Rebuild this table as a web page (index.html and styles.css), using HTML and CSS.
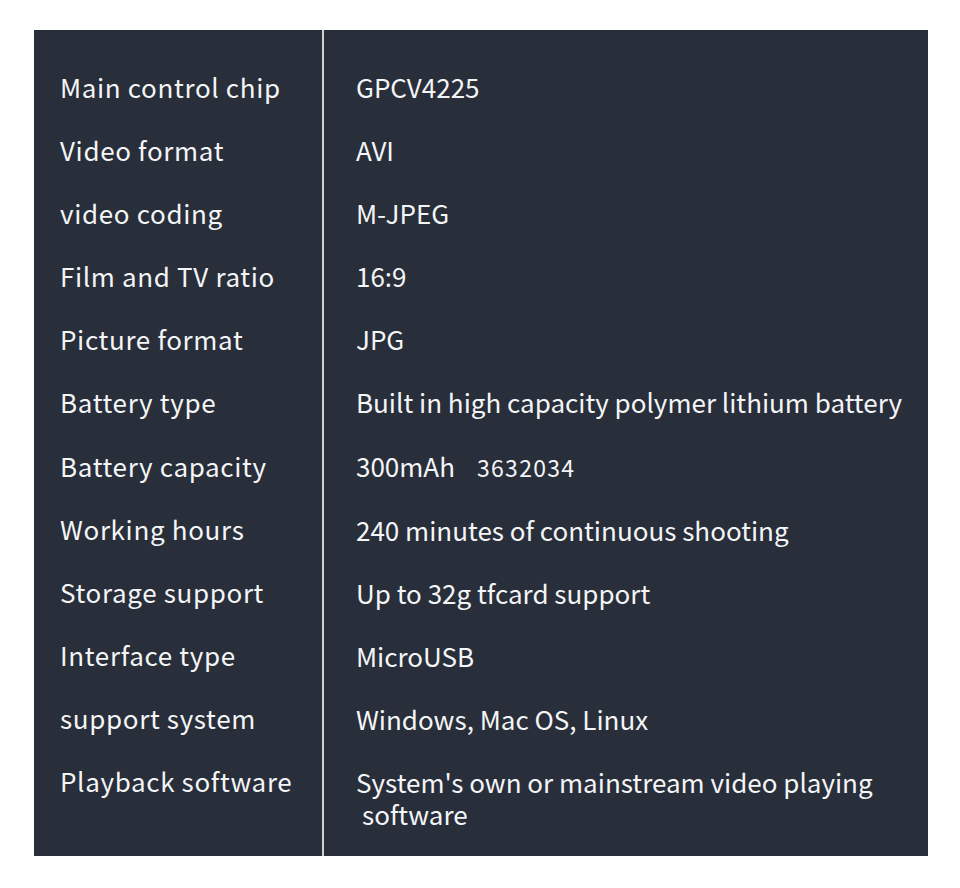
FILE: index.html
```html
<!DOCTYPE html>
<html>
<head>
<meta charset="utf-8">
<link rel="stylesheet" href="styles.css">
</head>
<body>
<div class="panel">
  <div class="col col-left">
    <div class="cell">Main control chip</div>
    <div class="cell">Video format</div>
    <div class="cell">video coding</div>
    <div class="cell">Film and TV ratio</div>
    <div class="cell">Picture format</div>
    <div class="cell">Battery type</div>
    <div class="cell">Battery capacity</div>
    <div class="cell">Working hours</div>
    <div class="cell">Storage support</div>
    <div class="cell">Interface type</div>
    <div class="cell">support system</div>
    <div class="cell">Playback software</div>
  </div>
  <div class="divider"></div>
  <div class="col col-right">
    <div class="cell">GPCV4225</div>
    <div class="cell">AVI</div>
    <div class="cell">M-JPEG</div>
    <div class="cell">16:9</div>
    <div class="cell">JPG</div>
    <div class="cell">Built in high capacity polymer lithium battery</div>
    <div class="cell">300mAh<span class="model">3632034</span></div>
    <div class="cell">240 minutes of continuous shooting</div>
    <div class="cell">Up to 32g tfcard support</div>
    <div class="cell">MicroUSB</div>
    <div class="cell">Windows, Mac OS, Linux</div>
    <div class="cell">System's own or mainstream video playing<br><span class="indent">software</span></div>
  </div>
</div>
</body>
</html>
```
FILE: styles.css
```css
html, body {
  margin: 0;
  padding: 0;
  background: #ffffff;
}
body {
  width: 960px;
  height: 888px;
  padding-top: 30px;
  padding-left: 34px;
  box-sizing: border-box;
  font-family: "Noto Sans CJK SC", "Noto Sans", sans-serif;
}
.panel {
  width: 894px;
  height: 826px;
  background: #282e3a;
  display: flex;
  color: #f4f5f6;
  font-size: 26px;
  line-height: 32px;
}
.col {
  display: flex;
  flex-direction: column;
  gap: 31.1px;
  padding-top: 41px;
}
.col-left {
  padding-left: 26px;
  box-sizing: border-box;
  width: 288px;
  letter-spacing: 0.65px;
}
.divider {
  width: 2px;
  background: #cfd0d2;
}
.col-right {
  padding-left: 32px;
  flex: 1;
}
.cell {
  white-space: nowrap;
}
.model {
  font-size: 23px;
  letter-spacing: 1.3px;
  margin-left: 22px;
}
.indent {
  padding-left: 6px;
}
```
